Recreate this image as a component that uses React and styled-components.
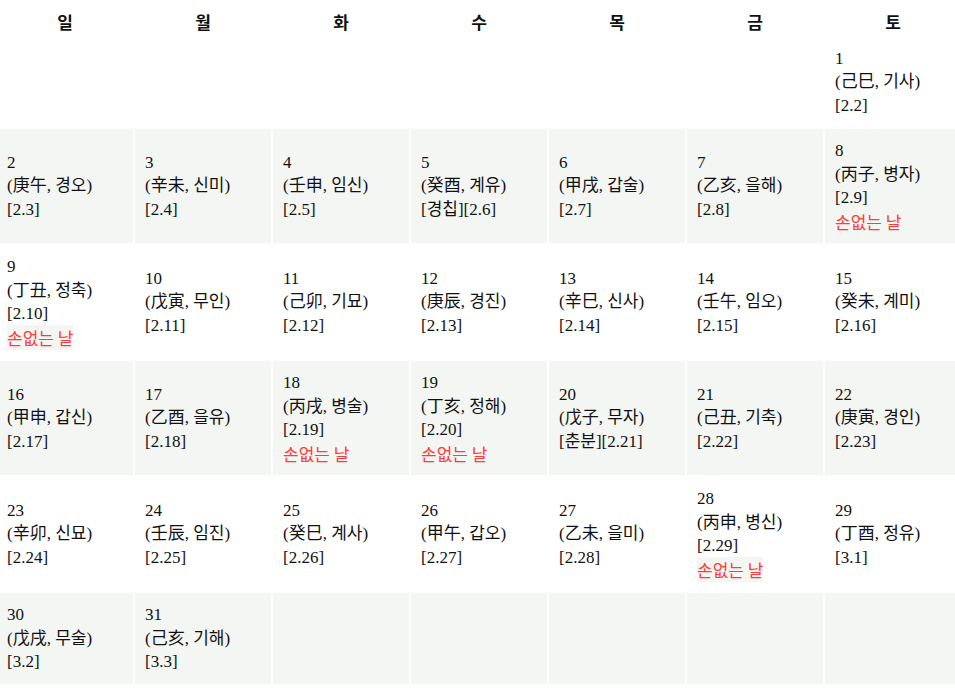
import React from "react";
import styled, { createGlobalStyle } from "styled-components";

const Global = createGlobalStyle`
  html, body { margin: 0; padding: 0; background: #fff; overflow: hidden; }
  body { font-family: "Liberation Serif", "Noto Sans CJK KR", serif; color: #111; }
`;

const GRAY = "#f4f6f3";

const Calendar = styled.div`
  display: flex;
  flex-direction: column;
  gap: 2px;
  margin-left: -3px;
  width: 964px;
`;

const Row = styled.div`
  display: grid;
  grid-template-columns: repeat(7, 136px);
  column-gap: 2px;
`;

const HeadCell = styled.div`
  padding: 10px 0 1px;
  line-height: 23.5px;
  font-size: 17px;
  font-weight: bold;
  text-align: center;
  font-family: "Noto Sans CJK KR", sans-serif;
  color: #111;
`;

const Cell = styled.div`
  background: ${(p) => (p.$shade ? GRAY : "#fff")};
  padding: 10px;
  display: flex;
  flex-direction: column;
  justify-content: center;
  font-size: 17px;
  line-height: 23.5px;
  min-height: 70.5px;
`;

const Line = styled.div`
  white-space: nowrap;
  height: 23.5px;
`;

const Lucky = styled.div`
  white-space: nowrap;
  height: 23.5px;
  font-family: "Noto Sans CJK KR", sans-serif;
  & > span {
    color: #ff3b3b;
    background: ${GRAY};
  }
`;

const heads = ["일", "월", "화", "수", "목", "금", "토"];

const weeks = [
  [null, null, null, null, null, null, ["1", "己巳, 기사", "[2.2]"]],
  [
    ["2", "庚午, 경오", "[2.3]"],
    ["3", "辛未, 신미", "[2.4]"],
    ["4", "壬申, 임신", "[2.5]"],
    ["5", "癸酉, 계유", "[경칩][2.6]"],
    ["6", "甲戌, 갑술", "[2.7]"],
    ["7", "乙亥, 을해", "[2.8]"],
    ["8", "丙子, 병자", "[2.9]", true],
  ],
  [
    ["9", "丁丑, 정축", "[2.10]", true],
    ["10", "戊寅, 무인", "[2.11]"],
    ["11", "己卯, 기묘", "[2.12]"],
    ["12", "庚辰, 경진", "[2.13]"],
    ["13", "辛巳, 신사", "[2.14]"],
    ["14", "壬午, 임오", "[2.15]"],
    ["15", "癸未, 계미", "[2.16]"],
  ],
  [
    ["16", "甲申, 갑신", "[2.17]"],
    ["17", "乙酉, 을유", "[2.18]"],
    ["18", "丙戌, 병술", "[2.19]", true],
    ["19", "丁亥, 정해", "[2.20]", true],
    ["20", "戊子, 무자", "[춘분][2.21]"],
    ["21", "己丑, 기축", "[2.22]"],
    ["22", "庚寅, 경인", "[2.23]"],
  ],
  [
    ["23", "辛卯, 신묘", "[2.24]"],
    ["24", "壬辰, 임진", "[2.25]"],
    ["25", "癸巳, 계사", "[2.26]"],
    ["26", "甲午, 갑오", "[2.27]"],
    ["27", "乙未, 을미", "[2.28]"],
    ["28", "丙申, 병신", "[2.29]", true],
    ["29", "丁酉, 정유", "[3.1]"],
  ],
  [
    ["30", "戊戌, 무술", "[3.2]"],
    ["31", "己亥, 기해", "[3.3]"],
    null,
    null,
    null,
    null,
    null,
  ],
];

export default function App() {
  return (
    <>
      <Global />
      <Calendar>
        <Row>
          {heads.map((h) => (
            <HeadCell key={h}>{h}</HeadCell>
          ))}
        </Row>
        {weeks.map((week, wi) => (
          <Row key={wi}>
            {week.map((d, di) => (
              <Cell key={di} $shade={wi % 2 === 1}>
                {d && (
                  <>
                    <Line>{d[0]}</Line>
                    <Line>({d[1]})</Line>
                    <Line>{d[2]}</Line>
                    {d[3] && (
                      <Lucky>
                        <span>손없는 날</span>
                      </Lucky>
                    )}
                  </>
                )}
              </Cell>
            ))}
          </Row>
        ))}
      </Calendar>
    </>
  );
}
